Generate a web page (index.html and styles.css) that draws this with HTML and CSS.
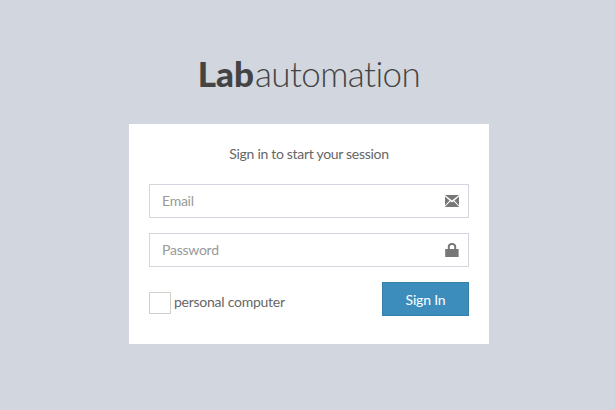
FILE: index.html
```html
<!DOCTYPE html>
<html lang="en">
<head>
<meta charset="utf-8">
<title>Labautomation</title>
<link rel="stylesheet" href="styles.css">
</head>
<body>
<main class="login">
  <h1 class="logo"><b>Lab</b>automation</h1>
  <form class="card">
    <p class="msg">Sign in to start your session</p>
    <div class="field">
      <input class="input" type="text" placeholder="Email">
      <svg class="icon" viewBox="0 0 14 12" width="14" height="12"><path d="M0 0H14L7 5.6ZM0 1.4V10.4L4.6 5.4ZM14 1.4V10.4L9.4 5.4ZM0 12H14V11.8L8.6 6.2L7 7.6L5.4 6.2L0 11.8Z"/></svg>
    </div>
    <div class="field">
      <input class="input" type="password" placeholder="Password">
      <svg class="icon" viewBox="0 0 14 14" width="14" height="14"><path d="M2.8 6V3.6C2.8 1.2 4.6 0 7 0S11.2 1.2 11.2 3.6V6H9.2V3.8C9.2 2.6 8.2 2 7 2S4.8 2.6 4.8 3.8V6ZM0.2 6H13.6V14H0.2Z"/></svg>
    </div>
    <div class="row">
      <label class="check"><span class="box"></span><span class="label-text">personal computer</span></label>
      <button class="btn" type="button">Sign In</button>
    </div>
  </form>
</main>
</body>
</html>
```
FILE: styles.css
```css
* { box-sizing: border-box; }
html, body { height: 100%; }
body {
  margin: 0;
  background: #d2d6de;
  font-family: "Lato", "Open Sans", sans-serif;
  font-size: 14px;
  font-variant-ligatures: none;
  color: #444;
  overflow: hidden;
}
.login { width: 360px; margin-left: 129px; padding-top: 48px; }
.logo {
  margin: 0 0 26px;
  height: 50px;
  line-height: 50px;
  text-align: center;
  font-size: 35px;
  font-weight: 300;
  letter-spacing: -0.6px;
  color: #444;
}
.logo b { font-weight: 900; letter-spacing: 0; margin-right: 1px; }
.card { background: #fff; padding: 20px 20px 28px; }
.msg { margin: 0 0 20px; height: 20px; line-height: 20px; text-align: center; color: #666; letter-spacing: -0.3px; }
.field { position: relative; margin-bottom: 15px; }
.input {
  display: block;
  width: 100%;
  height: 34px;
  padding: 0 12px 1px;
  border: 1px solid #d2d6de;
  border-radius: 0;
  outline: none;
  background: #fff;
  font: inherit;
  letter-spacing: -0.25px;
  color: #555;
}
.input::placeholder { color: #999; opacity: 1; }
.icon { position: absolute; right: 10px; top: 50%; transform: translateY(-50%); fill: #777; }
.row { display: flex; justify-content: space-between; align-items: flex-start; }
.check { display: flex; align-items: center; gap: 3px; margin-top: 10px; color: #666; letter-spacing: -0.25px; }
.label-text { margin-bottom: 3px; }
.box { width: 22px; height: 22px; border: 1px solid #d3cfc8; background: #fff; }
.btn {
  width: 87px;
  height: 34px;
  border: 1px solid #367fa9;
  border-radius: 0;
  background: #3c8dbc;
  color: #fff;
  font: inherit;
  letter-spacing: -0.2px;
}
```
